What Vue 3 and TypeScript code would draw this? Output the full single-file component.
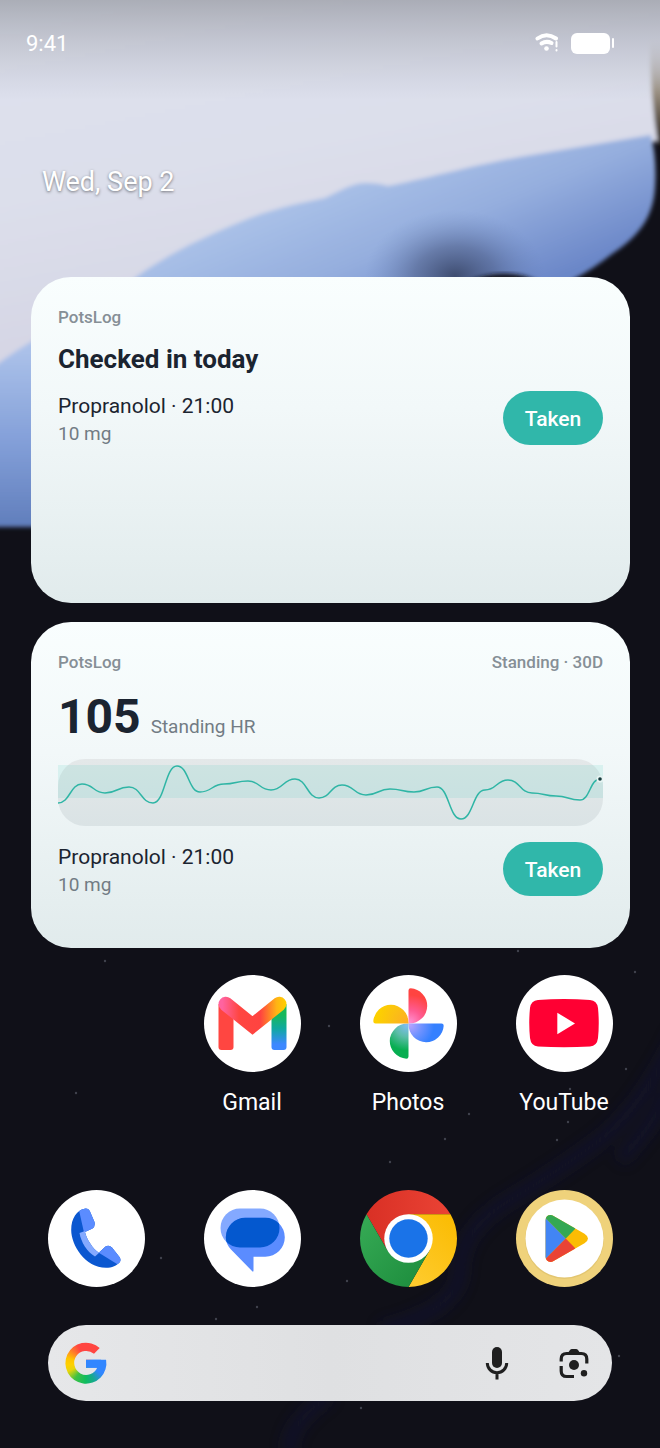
<script setup lang="ts">
interface Point {
  x: number
  y: number
}

interface Dose {
  name: string
  amount: string
}

const dose: Dose = { name: 'Propranolol · 21:00', amount: '10 mg' }

const readings: Point[] = [
  { x: 0, y: 44 }, { x: 24, y: 25 }, { x: 47, y: 34 }, { x: 71, y: 28 },
  { x: 95, y: 44 }, { x: 119, y: 7 }, { x: 142, y: 33 }, { x: 166, y: 25 },
  { x: 190, y: 22 }, { x: 213, y: 31 }, { x: 237, y: 20 }, { x: 261, y: 39 },
  { x: 284, y: 26 }, { x: 308, y: 36 }, { x: 332, y: 30 }, { x: 356, y: 33 },
  { x: 379, y: 28 }, { x: 403, y: 60 }, { x: 427, y: 31 }, { x: 450, y: 21 },
  { x: 474, y: 34 }, { x: 498, y: 37 }, { x: 522, y: 41 }, { x: 542, y: 20 },
]

const last = readings[readings.length - 1]

const trend = readings.reduce((path, p, i) => {
  if (i === 0) return `M${p.x} ${p.y}`
  const prev = readings[i - 1]
  const mid = (prev.x + p.x) / 2
  return `${path}C${mid} ${prev.y} ${mid} ${p.y} ${p.x} ${p.y}`
}, '')

const stars: Point[] = [
  { x: 105, y: 961 }, { x: 76, y: 1093 }, { x: 469, y: 1114 }, { x: 445, y: 1139 },
  { x: 557, y: 1140 }, { x: 568, y: 1122 }, { x: 570, y: 1089 }, { x: 626, y: 1069 },
  { x: 257, y: 1307 }, { x: 216, y: 1319 }, { x: 161, y: 1258 }, { x: 518, y: 951 },
  { x: 635, y: 972 }, { x: 347, y: 1281 }, { x: 619, y: 1356 }, { x: 390, y: 1162 },
  { x: 361, y: 1408 }, { x: 329, y: 1026 },
]
</script>

<template>
  <main class="home">
    <svg class="wallpaper" viewBox="0 0 660 1448" preserveAspectRatio="xMidYMid slice" aria-hidden="true">
      <defs>
        <linearGradient id="sky" x1="0" y1="0" x2="0.35" y2="1">
          <stop offset="0" stop-color="#dfe2ee" />
          <stop offset="0.5" stop-color="#dcdfeb" />
          <stop offset="1" stop-color="#d3d2e2" />
        </linearGradient>
        <linearGradient id="shade" x1="0" y1="0" x2="0" y2="1">
          <stop offset="0" stop-color="#6c6e74" stop-opacity="0.45" />
          <stop offset="0.45" stop-color="#7d7f88" stop-opacity="0.25" />
          <stop offset="1" stop-color="#8d909c" stop-opacity="0" />
        </linearGradient>
        <linearGradient id="petal" gradientUnits="userSpaceOnUse" x1="330" y1="160" x2="430" y2="400">
          <stop offset="0" stop-color="#afc6ea" />
          <stop offset="0.4" stop-color="#95aede" />
          <stop offset="0.75" stop-color="#6b87c8" />
          <stop offset="1" stop-color="#5f7dbd" />
        </linearGradient>
        <linearGradient id="petal-left" gradientUnits="userSpaceOnUse" x1="0" y1="350" x2="0" y2="530">
          <stop offset="0" stop-color="#abc1e9" />
          <stop offset="0.5" stop-color="#84a0d9" />
          <stop offset="1" stop-color="#5f7dbb" />
        </linearGradient>
        <radialGradient id="smoke">
          <stop offset="0" stop-color="#2a3450" stop-opacity="0.75" />
          <stop offset="0.45" stop-color="#3c4a70" stop-opacity="0.45" />
          <stop offset="1" stop-color="#6580b8" stop-opacity="0" />
        </radialGradient>
        <linearGradient id="rim" x1="0" y1="0" x2="0" y2="1">
          <stop offset="0" stop-color="#bcb9b8" stop-opacity="0" />
          <stop offset="0.5" stop-color="#9a8f80" />
          <stop offset="1" stop-color="#241c14" />
        </linearGradient>
        <filter id="soft"><feGaussianBlur stdDeviation="2" /></filter>
        <filter id="haze" x="-30%" y="-30%" width="160%" height="160%"><feGaussianBlur stdDeviation="7" /></filter>
      </defs>
      <rect width="660" height="1448" fill="#101018" />
      <g filter="url(#soft)">
        <path d="M-10 -10H670V138L600 155L450 200L366 210L136 290L30 350L-10 375Z" fill="url(#sky)" />
        <path d="M136 277C168 254 205 236 250 218C282 206 306 202 325 198C342 190 352 183 366 183Q378 183 388 186C425 179 465 167 520 157L651 135Q657 160 655 188C653 220 636 238 612 254Q593 269 574 279L480 340H80Z" fill="url(#petal)" />
        <path d="M-10 370Q15 350 45 334V527H-10Z" fill="url(#petal-left)" />
        <path d="M650 40H670V145H658Q650 95 650 40Z" fill="url(#rim)" />
      </g>
      <ellipse cx="455" cy="276" rx="90" ry="66" fill="url(#smoke)" />
      <path d="M450 290Q500 262 540 282V300H450Z" fill="#14161f" filter="url(#soft)" />
      <g class="veins" filter="url(#haze)">
        <path d="M680 1030Q640 1110 600 1140T510 1200T460 1270T380 1330" />
        <path d="M670 1090Q650 1130 620 1160M330 1395Q285 1425 290 1455" />
      </g>
      <circle v-for="star in stars" :key="`${star.x}-${star.y}`" :cx="star.x" :cy="star.y" r="1.2" fill="#40424d" />
      <rect width="660" height="100" fill="url(#shade)" />
    </svg>

    <header class="status">
      <time>9:41</time>
      <div class="indicators">
        <svg class="wifi" viewBox="0 0 24 20" role="img" aria-label="Wi-Fi, limited connection">
          <path d="M2.500 5.500Q11.500 -1 21 5.500" />
          <path d="M6.500 10.500Q11.500 7.500 16.500 10" />
          <circle cx="11.500" cy="15.500" r="2.300" />
          <path class="alert" d="M21.500 9V13.500M21.500 17V17.500" />
        </svg>
        <svg class="battery" viewBox="0 0 44 22" role="img" aria-label="Battery full">
          <rect x="0" y="1" width="39" height="21" rx="6" />
          <rect x="41" y="6" width="2" height="10" rx="1" />
        </svg>
      </div>
    </header>

    <p class="date">Wed, Sep 2</p>

    <section class="widgets">
      <article class="card">
        <div class="card-head"><span>PotsLog</span></div>
        <h2 class="title">Checked in today</h2>
        <div class="dose">
          <p>{{ dose.name }}<small>{{ dose.amount }}</small></p>
          <button type="button" class="taken">Taken</button>
        </div>
      </article>

      <article class="card">
        <div class="card-head"><span>PotsLog</span><span>Standing · 30D</span></div>
        <p class="metric"><strong>105</strong><span>Standing HR</span></p>
        <div class="chart">
          <svg viewBox="0 0 545 67" role="img" aria-label="Standing heart rate over 30 days">
            <rect class="band" y="6" width="545" height="33" />
            <path class="trend" :d="trend" />
            <circle class="halo" :cx="last.x" :cy="last.y" r="3.500" />
            <circle class="dot" :cx="last.x" :cy="last.y" r="1.800" />
          </svg>
        </div>
        <div class="dose">
          <p>{{ dose.name }}<small>{{ dose.amount }}</small></p>
          <button type="button" class="taken">Taken</button>
        </div>
      </article>
    </section>

    <nav class="apps" aria-label="Apps">
      <a class="app second" href="#gmail">
        <svg viewBox="0 0 97 97" aria-hidden="true">
          <defs>
            <linearGradient id="gm-v" gradientUnits="userSpaceOnUse" x1="15" y1="0" x2="82" y2="0">
              <stop offset="0.05" stop-color="#ff63a0" />
              <stop offset="0.3" stop-color="#ff4641" />
              <stop offset="0.62" stop-color="#ff4440" />
              <stop offset="0.86" stop-color="#ffb414" />
              <stop offset="1" stop-color="#ffcf00" />
            </linearGradient>
            <linearGradient id="gm-r" gradientUnits="userSpaceOnUse" x1="0" y1="36" x2="0" y2="75">
              <stop offset="0.1" stop-color="#17b85a" />
              <stop offset="0.45" stop-color="#10a9a0" />
              <stop offset="0.85" stop-color="#3c88ff" />
            </linearGradient>
          </defs>
          <circle cx="48.500" cy="48.500" r="48.500" fill="#fff" />
          <path d="M14.500 29V72Q14.500 75 17.500 75H26.500Q29.500 75 29.500 72V40Z" fill="#ff4641" />
          <path d="M82.500 29V72Q82.500 75 79.500 75H70.500Q67.500 75 67.500 72V40Z" fill="url(#gm-r)" />
          <path d="M21.800 29L48.500 50.500L75.200 29" fill="none" stroke="url(#gm-v)" stroke-width="14.500" stroke-linecap="round" />
        </svg>
        <span>Gmail</span>
      </a>
      <a class="app" href="#photos">
        <svg viewBox="0 0 97 97" aria-hidden="true">
          <defs>
            <radialGradient id="ph-r" gradientUnits="userSpaceOnUse" cx="50" cy="47" r="30">
              <stop offset="0" stop-color="#ff8fd0" /><stop offset="0.4" stop-color="#ff5b92" /><stop offset="0.9" stop-color="#ff4441" />
            </radialGradient>
            <radialGradient id="ph-b" gradientUnits="userSpaceOnUse" cx="50" cy="47" r="30">
              <stop offset="0" stop-color="#b7a3ff" /><stop offset="0.4" stop-color="#6f92ff" /><stop offset="0.8" stop-color="#3580ff" />
            </radialGradient>
            <radialGradient id="ph-g" gradientUnits="userSpaceOnUse" cx="50" cy="47" r="30">
              <stop offset="0" stop-color="#80bdf5" /><stop offset="0.4" stop-color="#5cbda9" /><stop offset="0.85" stop-color="#07ae51" />
            </radialGradient>
            <radialGradient id="ph-y" gradientUnits="userSpaceOnUse" cx="50" cy="47" r="30">
              <stop offset="0" stop-color="#ffad22" /><stop offset="0.4" stop-color="#fbbc18" /><stop offset="1" stop-color="#fdd000" />
            </radialGradient>
            <path id="blade" d="M48.500 48.500V15.500Q48.500 13.300 50.700 13.300A17.800 17.600 0 0 1 67.200 31A18 17.600 0 0 1 49.300 48.500Z" />
          </defs>
          <circle cx="48.500" cy="48.500" r="48.500" fill="#fff" />
          <use href="#blade" fill="url(#ph-r)" />
          <use href="#blade" fill="url(#ph-b)" transform="rotate(90 48.500 48.500)" />
          <use href="#blade" fill="url(#ph-g)" transform="rotate(180 48.500 48.500)" />
          <use href="#blade" fill="url(#ph-y)" transform="rotate(270 48.500 48.500)" />
        </svg>
        <span>Photos</span>
      </a>
      <a class="app" href="#youtube">
        <svg viewBox="0 0 97 97" aria-hidden="true">
          <circle cx="48.500" cy="48.500" r="48.500" fill="#fff" />
          <path d="M22 25Q48 23 74 25Q81 25.500 82 33Q83.500 48 82 63Q81 71 74 71.500Q48 73 22 71.500Q15 71 14 63Q12.500 48 14 33Q15 25.500 22 25Z" fill="#ff0033" />
          <path d="M41.300 37.700V59.300L59 48.500Z" fill="#fff" />
        </svg>
        <span>YouTube</span>
      </a>
    </nav>

    <nav class="dock" aria-label="Favourites">
      <a class="app" href="#phone" aria-label="Phone">
        <svg viewBox="0 0 97 97" aria-hidden="true">
          <defs>
            <clipPath id="handset">
              <path d="M36.500 18.700C29 20 23.200 28 23.200 40C23.200 55 37 77.800 58 77.800C64 77.800 69 75.500 71.500 72.500Q73.500 70 71.500 67L64 57.500Q61 54.500 57.500 56.500L50.800 62.800C45 59 38.500 49 37 42L44.500 38.500Q47.500 36 46.500 32L42 21.500Q40.500 18 36.500 18.700Z" />
            </clipPath>
          </defs>
          <circle cx="48.500" cy="48.500" r="48.500" fill="#fff" />
          <g clip-path="url(#handset)">
            <rect width="97" height="97" fill="#0b57d0" />
            <path d="M30.500 18L36 42.500L60 35V10H30Z" fill="#5b8cff" />
            <path d="M50.800 62.800L69 74L80 72V50H55Z" fill="#5b8cff" />
            <path d="M31.500 43L37 41L52 62L47 66.500C39 62 33 52 31.500 43Z" fill="#84a9ff" />
          </g>
        </svg>
      </a>
      <a class="app" href="#messages" aria-label="Messages">
        <svg viewBox="0 0 97 97" aria-hidden="true">
          <defs>
            <clipPath id="back-bubble"><rect x="16.500" y="18.500" width="59" height="39" rx="19.500" /></clipPath>
            <path id="front-bubble" d="M41.300 27.800H61.300A19.500 19.500 0 0 1 61.300 66.800H49.500V80.500Q49.500 82.500 48 81L27 59.500Q21.800 54 21.800 47.300A19.500 19.500 0 0 1 41.300 27.800Z" />
          </defs>
          <circle cx="48.500" cy="48.500" r="48.500" fill="#fff" />
          <rect x="16.500" y="18.500" width="59" height="39" rx="19.500" fill="#84a9ff" />
          <use href="#front-bubble" fill="#5b8cff" />
          <g clip-path="url(#back-bubble)"><use href="#front-bubble" fill="#0458cf" /></g>
        </svg>
      </a>
      <a class="app" href="#chrome" aria-label="Chrome">
        <svg viewBox="0 0 97 97" aria-hidden="true">
          <defs>
            <linearGradient id="ch-r"><stop offset="0" stop-color="#d93025" /><stop offset="1" stop-color="#ea4335" /></linearGradient>
            <linearGradient id="ch-y" x1="0.8" y1="0" x2="0.2" y2="1"><stop offset="0" stop-color="#fbbc04" /><stop offset="1" stop-color="#fecb2d" /></linearGradient>
            <linearGradient id="ch-g" x1="0" y1="0.2" x2="0.8" y2="1"><stop offset="0" stop-color="#34a853" /><stop offset="1" stop-color="#1e8e3e" /></linearGradient>
          </defs>
          <path d="M6.500 24.250A48.500 48.500 0 0 1 90.500 24.250H48.500V48.500L27.500 60.600Z" fill="url(#ch-r)" />
          <path d="M90.500 24.250A48.500 48.500 0 0 1 48.500 97L69.500 60.600L48.500 48.500V24.250Z" fill="url(#ch-y)" />
          <path d="M48.500 97A48.500 48.500 0 0 1 6.500 24.250L27.500 60.600L48.500 48.500L69.500 60.600Z" fill="url(#ch-g)" />
          <circle cx="48.500" cy="48.500" r="24.250" fill="#fff" />
          <circle cx="48.500" cy="48.500" r="19.200" fill="#1a73e8" />
        </svg>
      </a>
      <a class="app" href="#play" aria-label="Play Store">
        <svg viewBox="0 0 97 97" aria-hidden="true">
          <defs>
            <clipPath id="play-mark">
              <path d="M29.500 30Q30 25 34.500 25Q36 25 38 26.200L68.500 43.700Q72 46 72 48.500T68.500 53.300L38 70.800Q36 72 34.500 72Q30 71.500 29.500 67Z" />
            </clipPath>
          </defs>
          <circle cx="48.500" cy="48.500" r="48.500" fill="#efd27b" />
          <circle cx="48.500" cy="49.500" r="39.500" fill="#e3c670" />
          <circle cx="48.500" cy="48.500" r="39" fill="#fff" />
          <g clip-path="url(#play-mark)">
            <rect width="97" height="97" fill="#fbbc04" />
            <path d="M20 18.500L49.800 48.500L20 78.500Z" fill="#4285f4" />
            <path d="M26 24.500L49.800 48.500L59 39L60 20H26Z" fill="#34a853" />
            <path d="M26 72.500L49.800 48.500L59 58L60 80H26Z" fill="#ea4335" />
          </g>
        </svg>
      </a>
    </nav>

    <form class="search" role="search" @submit.prevent>
      <span class="logo" aria-hidden="true"></span>
      <input type="search" aria-label="Search" />
      <button type="button" aria-label="Voice search">
        <svg viewBox="0 0 34 34" aria-hidden="true">
          <rect x="12" y="1" width="10" height="21" rx="5" fill="#1f1f1f" />
          <path d="M7.300 17A9.700 9.700 0 0 0 26.700 17M17 27V33.500" fill="none" stroke="#1f1f1f" stroke-width="3" />
        </svg>
      </button>
      <button type="button" aria-label="Lens search">
        <svg viewBox="0 0 34 34" aria-hidden="true">
          <path d="M4.200 15.500V13Q4.200 7.500 9.700 7.500H24.300Q29.800 7.500 29.800 13V17.500M4.200 20V25Q4.200 30.500 9.700 30.500H17" fill="none" stroke="#1f1f1f" stroke-width="3.200" />
          <path d="M10.500 7.500L13 4Q13.700 3 15 3H19Q20.300 3 21 4L23.500 7.500Z" fill="#1f1f1f" />
          <circle cx="17" cy="19" r="5" fill="#1f1f1f" />
          <circle cx="27" cy="27.300" r="3.200" fill="#1f1f1f" />
        </svg>
      </button>
    </form>
  </main>
</template>

<style>
body {
  margin: 0;
  background: #101018;
}
</style>

<style scoped>
.home {
  position: relative;
  isolation: isolate;
  display: flex;
  flex-direction: column;
  box-sizing: border-box;
  min-height: 100vh;
  overflow: hidden;
  font-family: Roboto, "Noto Sans", sans-serif;
  color: #1b2430;
}

.wallpaper {
  position: absolute;
  inset: 0;
  z-index: -1;
  width: 100%;
  height: 100%;
}

.veins {
  fill: none;
  stroke: #17183c;
  stroke-width: 14;
  opacity: 0.45;
}

.status {
  display: flex;
  justify-content: space-between;
  align-items: center;
  height: 86px;
  padding: 0 45px 0 26px;
  color: #fff;
  font-size: 22px;
}

.indicators {
  display: flex;
  align-items: center;
  gap: 12px;
}

.indicators svg {
  display: block;
  fill: #fff;
}

.wifi {
  width: 24px;
  height: 20px;
}

.wifi path {
  fill: none;
  stroke: #fff;
  stroke-width: 4;
  stroke-linecap: round;
}

.wifi .alert {
  stroke-width: 2;
}

.battery {
  width: 44px;
  height: 22px;
}

.date {
  margin: 80px 42px 79px;
  color: #fff;
  font-size: 27px;
  line-height: 32px;
  text-shadow: 0 1px 3px rgba(0, 0, 0, 0.5);
}

.widgets {
  display: grid;
  gap: 19px;
  padding: 0 30px 0 31px;
}

.card {
  box-sizing: border-box;
  min-height: 326px;
  padding: 30px 27px 26px;
  border-radius: 40px;
  background: linear-gradient(#f9fefe, #f2f8f9 40%, #e1ebec);
}

.card-head {
  display: flex;
  justify-content: space-between;
  color: #868f96;
  font-size: 17px;
  font-weight: 500;
  line-height: 20px;
}

.title {
  margin: 17px 0 15px;
  font-size: 26px;
  font-weight: 700;
  line-height: 30px;
}

.dose {
  display: flex;
  justify-content: space-between;
  align-items: center;
}

.dose p {
  margin: 0;
  padding-top: 4px;
  font-size: 21px;
  line-height: 27px;
}

.dose small {
  display: block;
  color: #727c84;
  font-size: 19px;
}

.taken {
  width: 100px;
  height: 54px;
  padding: 2px 0 0;
  border: 0;
  border-radius: 27px;
  background: #30b7aa;
  color: #fff;
  font: 500 21px Roboto, sans-serif;
}

.metric {
  display: flex;
  align-items: baseline;
  gap: 10px;
  margin: 16px 0 4px;
  line-height: 57px;
}

.metric strong {
  font-size: 48px;
  font-weight: 700;
}

.metric span {
  color: #727c84;
  font-size: 19px;
}

.chart {
  margin-bottom: 14px;
  border-radius: 27px;
  background: linear-gradient(#e4e8e9, #dae3e5);
}

.chart svg {
  display: block;
  width: 100%;
}

.band {
  fill: #30c7b8;
  fill-opacity: 0.12;
}

.trend {
  fill: none;
  stroke: #2fb5a5;
  stroke-width: 1.5;
}

.halo {
  fill: #e6f3f2;
}

.dot {
  fill: #163a3c;
}

.apps,
.dock {
  display: grid;
  grid-template-columns: repeat(4, 1fr);
  padding: 0 18px;
}

.apps {
  margin-top: 27px;
}

.dock {
  margin-top: 73px;
}

.app {
  display: grid;
  justify-items: center;
  gap: 17px;
  color: #fff;
  font-size: 23px;
  line-height: 28px;
  text-decoration: none;
}

.app svg {
  display: block;
  width: 97px;
  height: 97px;
}

.second {
  grid-column: 2;
}

.search {
  display: flex;
  align-items: center;
  box-sizing: border-box;
  height: 76px;
  margin: 38px 48px 47px;
  padding: 0 21px 0 17px;
  border-radius: 38px;
  background: linear-gradient(90deg, #e6e7e9, #dfe0e2 50%, #e4e5e7);
}

.logo {
  width: 42px;
  height: 42px;
  background:
    linear-gradient(#3186ff, #3186ff) 20px 17px / 16px 9px no-repeat,
    conic-gradient(#ff4641 0deg, #ff4641 50deg, #3186ff 60deg, #3186ff 125deg, #17a98f 155deg, #0ebc5f 180deg, #3fc143 215deg, #e8d50c 245deg, #ffd000 265deg, #ffc400 285deg, #ff7a2b 312deg, #ff4641 335deg);
  clip-path: path("M21 17.700H41.100A20.500 20.500 0 1 1 34.700 6L29 11.800A12 12 0 1 0 32.200 25.700H21Z");
}

.search input {
  flex: 1;
  min-width: 0;
  border: 0;
  outline: 0;
  background: none;
  font: 22px Roboto, sans-serif;
}

.search button {
  width: 34px;
  height: 34px;
  padding: 0;
  border: 0;
  background: none;
}

.search button + button {
  margin-left: 43px;
}

.search button svg {
  display: block;
}
</style>
